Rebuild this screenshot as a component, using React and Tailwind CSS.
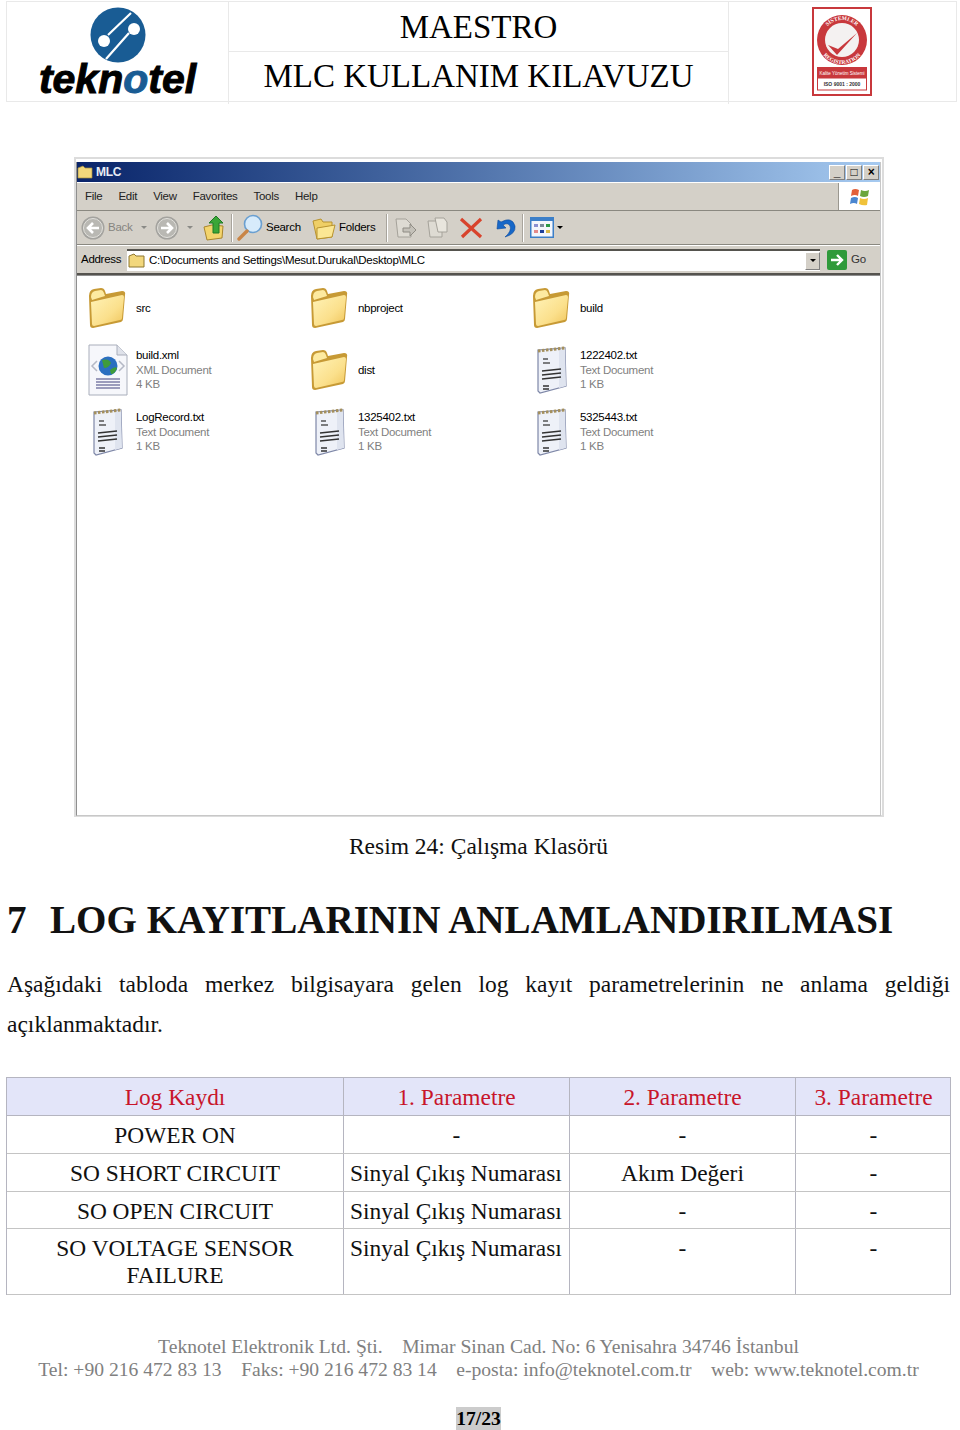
import React from "react";

const SERIF = "font-['Liberation_Serif',serif]";

const Folder = () => (
  <svg width="40" height="42" viewBox="0 0 40 42" className="shrink-0 ml-[-1px]">
    <defs>
      <linearGradient id="fold" x1="0" y1="0" x2="1" y2="1">
        <stop offset="0" stopColor="#fff3b8" />
        <stop offset="0.6" stopColor="#fbe08c" />
        <stop offset="1" stopColor="#efc45a" />
      </linearGradient>
    </defs>
    <path d="M2 9 Q2 3 7 2 L14 1 Q17 1 18 4 L19 7 L35 4 Q39 4 38 8 L36 32 Q36 34 34 35 L6 41 Q3 41 3 38 Z" fill="#c79a35" />
    <path d="M4 15 L35 8 Q37 8 37 10 L35 31 Q35 33 33 33 L7 39 Q5 39 5 37 Z" fill="url(#fold)" />
    <path d="M4 10 Q4 5 8 4 L14 3 Q16 3 17 6 L18 9 L5 13 Z" fill="#fdeaa0" />
  </svg>
);

const Notepad = () => (
  <svg width="32" height="48" viewBox="0 0 32 48" className="shrink-0 ml-[3px]">
    <path d="M3 4 L30 2 L31 40 L5 47 L3 45 Z" fill="#eef1f8" stroke="#7f88a8" strokeWidth="1.2" />
    <path d="M24 3 L30 2 L31 40 L24 42 Z" fill="#dfe4ef" />
    <path d="M3 5 L30 2" stroke="#a48f5c" strokeWidth="3" strokeDasharray="2.5 1.5" />
    <path d="M8 13 H13 M8 17 H15" stroke="#555" strokeWidth="1.5" />
    <path d="M7 25 L26 23 M7 29 L26 27 M7 33 L26 31" stroke="#333" strokeWidth="1.3" />
    <path d="M8 40 H14 M8 43 H14" stroke="#333" strokeWidth="1.3" />
  </svg>
);

const XmlDoc = () => (
  <svg width="40" height="52" viewBox="0 0 40 52" className="shrink-0">
    <path d="M1 1 H29 L39 11 V51 H1 Z" fill="#f6f7fb" stroke="#a9aebb" />
    <path d="M29 1 V11 H39" fill="#dfe2ea" stroke="#a9aebb" />
    <path d="M9 17 L4 22 L9 27 M31 17 L36 22 L31 27" fill="none" stroke="#b5b9c6" strokeWidth="1.5" />
    <circle cx="20" cy="22" r="9.5" fill="#2b6fc0" />
    <path d="M14 16 Q21 14 23 19 Q21 24 16 24 Z M22 26 Q27 22 29 24 Q27 30 23 30 Z" fill="#3f9c3a" />
    <path d="M8 35 H32 M8 38 H32 M8 41 H32 M8 44 H32" stroke="#7d7fa8" strokeWidth="1.3" />
  </svg>
);

const FileItem = ({ icon, name, lines = [] }) => (
  <div className="flex items-center h-[62px]">
    <div className="w-[48px] flex justify-start">{icon}</div>
    <div className="text-[11.5px] leading-[14.5px] text-black">
      <div>{name}</div>
      {lines.map((l) => (
        <div key={l} className="text-[#7f7f7f]">{l}</div>
      ))}
    </div>
  </div>
);

const Circle = ({ flip }) => (
  <svg width="24" height="24" viewBox="0 0 24 24" className="shrink-0">
    <circle cx="12" cy="12" r="11.5" fill="#a3a29e" />
    <circle cx="12" cy="12" r="9.5" fill="#b9b8b3" stroke="#e2e1dc" />
    <path d={flip ? "M6 12 H17 M12 7 L17 12 L12 17" : "M18 12 H7 M12 7 L7 12 L12 17"} stroke="#fff" strokeWidth="2.6" fill="none" />
  </svg>
);

const SmallArrow = ({ className = "", color = "#8a8a86" }) => (
  <span className={`w-0 h-0 border-x-[3px] border-x-transparent border-t-[3px] ${className}`} style={{ borderTopColor: color }} />
);

const Sep = ({ className = "" }) => <span className={`w-[2px] h-[28px] bg-[#a8a49c] border-r border-white ${className}`} />;

const Toolbar = () => (
  <div className="h-[34px] flex items-center pl-[4px] border-b border-[#8a8880] text-[11.5px] whitespace-nowrap">
    <Circle />
    <span className="ml-[3px] w-[24px] text-[#85847f]">Back</span>
    <SmallArrow className="ml-[9px]" />
    <span className="ml-[8px]"><Circle flip /></span>
    <SmallArrow className="ml-[8px]" />
    <svg width="22" height="26" viewBox="0 0 22 26" className="ml-[10px] shrink-0">
      <path d="M1 12 L9 10 L20 11 L19 23 L4 25 Z" fill="#f3d46c" stroke="#a9852c" />
      <path d="M13 1 L20 8 H16 V18 H10 V8 H6 Z" fill="#3aa637" stroke="#1f7a24" />
    </svg>
    <Sep className="ml-[6px]" />
    <svg width="26" height="27" viewBox="0 0 26 27" className="ml-[4px] shrink-0">
      <circle cx="16" cy="10" r="8.5" fill="#d7ebfb" stroke="#6a9fd0" strokeWidth="1.6" />
      <path d="M10 17 L2 25" stroke="#c98546" strokeWidth="3.4" strokeLinecap="round" />
    </svg>
    <span className="ml-[3px] w-[33px]">Search</span>
    <svg width="24" height="24" viewBox="0 0 24 24" className="ml-[13px] shrink-0">
      <path d="M1 5 L9 3 L11 6 L20 6 L20 21 L5 23 Z" fill="#efcf66" stroke="#b8932f" />
      <path d="M5 12 L23 9 L20 21 L5 23 Z" fill="#fbe794" stroke="#b8932f" />
    </svg>
    <span className="ml-[3px] w-[36px]">Folders</span>
    <Sep className="ml-[11px]" />
    <svg width="23" height="23" viewBox="0 0 23 23" className="ml-[6px] shrink-0">
      <path d="M2 3 H12 L17 8 V21 H4 Z" fill="#dedbd3" stroke="#a5a29a" />
      <path d="M9 12 H16 V8 L22 14 L16 20 V16 H9 Z" fill="#c4c1b9" stroke="#8f8c84" />
    </svg>
    <svg width="23" height="23" viewBox="0 0 23 23" className="ml-[9px] shrink-0">
      <path d="M2 5 H12 L16 9 V21 H4 Z" fill="#dedbd3" stroke="#a5a29a" />
      <path d="M9 2 H18 L21 6 V16 H12 Z" fill="#e8e5dd" stroke="#a5a29a" />
    </svg>
    <svg width="24" height="22" viewBox="0 0 24 22" className="ml-[10px] shrink-0">
      <path d="M2 2 L22 20 M22 2 L3 20" stroke="#d8432c" strokeWidth="3.2" />
    </svg>
    <svg width="24" height="24" viewBox="0 0 24 24" className="ml-[9px] shrink-0">
      <path d="M6 4 L5 13 L14 12 L11 9 Q16 6 18 10 Q20 15 13 21 Q24 18 23 10 Q20 0 9 6 Z" fill="#1667c8" stroke="#0d4a9c" strokeWidth="0.6" />
    </svg>
    <Sep className="ml-[6px]" />
    <svg width="24" height="21" viewBox="0 0 24 21" className="ml-[6px] shrink-0">
      <rect x="0.75" y="0.75" width="22.5" height="19.5" fill="#f3f6fc" stroke="#3c7fc8" strokeWidth="1.5" />
      <rect x="1" y="1" width="22" height="3" fill="#3c7fc8" />
      <path d="M4 7 H8 V10 H4 Z" fill="#8a8fd0" />
      <path d="M10 7 H14 V10 H10 Z" fill="#7a8a9a" />
      <path d="M16 7 H20 V10 H16 Z" fill="#2c9a46" />
      <path d="M4 13 H8 V16 H4 Z" fill="#e58a8a" />
      <path d="M10 13 H14 V16 H10 Z" fill="#1d3f9a" />
      <path d="M16 13 H20 V16 H16 Z" fill="#d8b84a" />
    </svg>
    <SmallArrow className="ml-[3px]" color="#000" />
  </div>
);

const ExplorerWindow = () => (
  <div className="mt-[55px] mx-[74px] w-[810px] h-[660px] border-[2px] border-[#dcdcdc] pr-[1px] pt-[3px] bg-white font-['Liberation_Sans',sans-serif] tracking-[-0.28px]">
    <div className="h-[654px] flex flex-col border-l border-l-[#8f8f8f] border-r border-b border-[#c8c8c8] bg-[#d4d0c8]">
      {/* title bar */}
      <div className="h-[20px] flex items-center pr-[1px] bg-gradient-to-r from-[#0a246a] to-[#a6caf0]">
        <svg width="17" height="14" viewBox="0 0 17 14">
          <path d="M1 3 L6 1 L8 3 H15 V13 H1 Z" fill="#f2d77c" stroke="#a88c3a" strokeWidth="0.7" />
        </svg>
        <span className="ml-[2px] text-[12px] font-bold text-[#e8ecf5]">MLC</span>
        <div className="ml-auto flex gap-[1px]">
          {["_", "□", "×"].map((c) => (
            <span key={c} className="w-[16px] h-[15px] flex items-center justify-center bg-[#d4d0c8] border border-[#808080] border-t-white border-l-white text-[12px] leading-none font-bold text-black">
              {c}
            </span>
          ))}
        </div>
      </div>
      {/* menu */}
      <div className="h-[29px] flex border-t border-white border-b border-b-[#8a8880]">
        <div className="flex-1 flex items-center pl-[8px] gap-[16px] text-[11.5px] text-[#222]">
          {["File", "Edit", "View", "Favorites", "Tools", "Help"].map((m) => (
            <span key={m}>{m}</span>
          ))}
        </div>
        <div className="w-[42px] flex items-center justify-center bg-white border-l border-[#9a978f]">
          <svg width="20" height="20" viewBox="0 0 20 20">
            <path d="M2 3 Q5 1 9 3 L8 9 Q5 7 1 9 Z" fill="#e2603a" />
            <path d="M11 3 Q15 5 19 3 L18 9 Q14 11 10 9 Z" fill="#6aa63c" />
            <path d="M1 11 Q5 9 8 11 L7 17 Q4 15 0 17 Z" fill="#4a86d0" />
            <path d="M10 11 Q14 13 18 11 L17 18 Q13 19 9 17 Z" fill="#f0c23a" />
          </svg>
        </div>
      </div>
      <Toolbar />
      {/* address bar */}
      <div className="h-[30px] flex items-center pl-[4px] text-[11.5px] border-t border-white border-b-[2px] border-b-[#55534e] whitespace-nowrap">
        <span className="w-[40px]">Address</span>
        <div className="ml-[6px] w-[693px] h-[22px] flex items-center bg-white border-t-[2px] border-[#55534e] pl-[1px]">
          <svg width="18" height="15" viewBox="0 0 18 15" className="shrink-0">
            <path d="M1 3 L6 1 L8 3 H16 V14 H1 Z" fill="#f2d77c" stroke="#8d7630" />
          </svg>
          <span className="ml-[3px]">C:\Documents and Settings\Mesut.Durukal\Desktop\MLC</span>
          <span className="ml-auto w-[15px] h-[18px] flex items-center justify-center bg-[#d4d0c8] border border-[#808080] border-t-white border-l-white">
            <SmallArrow color="#000" />
          </span>
        </div>
        <svg width="20" height="20" viewBox="0 0 20 20" className="ml-[7px] shrink-0">
          <rect width="20" height="20" rx="2" fill="#2f9a3a" />
          <path d="M4 10 H14 M10 5 L15 10 L10 15" stroke="#fff" strokeWidth="2.4" fill="none" />
        </svg>
        <span className="ml-[4px] text-[#333]">Go</span>
      </div>
      {/* file list */}
      <div className="flex-1 bg-white pt-[1px] pl-[11px] border-t border-[#8f8f8f]">
        <div className="grid grid-cols-[222px_222px_222px]">
          <FileItem icon={<Folder />} name="src" />
          <FileItem icon={<Folder />} name="nbproject" />
          <FileItem icon={<Folder />} name="build" />
          <FileItem icon={<XmlDoc />} name="build.xml" lines={["XML Document", "4 KB"]} />
          <FileItem icon={<Folder />} name="dist" />
          <FileItem icon={<Notepad />} name="1222402.txt" lines={["Text Document", "1 KB"]} />
          <FileItem icon={<Notepad />} name="LogRecord.txt" lines={["Text Document", "1 KB"]} />
          <FileItem icon={<Notepad />} name="1325402.txt" lines={["Text Document", "1 KB"]} />
          <FileItem icon={<Notepad />} name="5325443.txt" lines={["Text Document", "1 KB"]} />
        </div>
      </div>
    </div>
  </div>
);

const Header = () => (
  <div className="ml-[6px] mt-[1px] w-[951px] h-[101px] grid grid-cols-[222px_499px_228px] border border-[#e9e9e9]">
    <div className="flex flex-col items-center pt-[5px] border-r border-[#e9e9e9]">
      <svg width="56" height="56" viewBox="0 0 56 56" className="shrink-0">
        <circle cx="28" cy="28" r="27.5" fill="#195c94" />
        <path d="M41 6 L18 28 M39 26 L16 52" stroke="#fff" strokeWidth="2.2" />
        <circle cx="14" cy="34" r="6" fill="#fff" />
        <circle cx="44" cy="22" r="6" fill="#fff" />
      </svg>
      <div className="-mt-[6px] text-[41px] leading-[44px] font-bold italic text-black font-['Liberation_Sans',sans-serif] [-webkit-text-stroke:1px_black]">
        tekn<span className="text-[#195c94] [-webkit-text-stroke:1px_#195c94]">o</span>tel
      </div>
    </div>
    <div className={`flex flex-col text-[33px] text-black ${SERIF}`}>
      <div className="h-[50px] flex items-center justify-center pt-[2px] border-b border-[#e9e9e9]">MAESTRO</div>
      <div className="flex-1 flex items-center justify-center pb-[2px]">MLC KULLANIM KILAVUZU</div>
    </div>
    <div className="flex items-center justify-center pb-[2px] pr-[2px] border-l border-[#e9e9e9]">
      <svg width="60" height="89" viewBox="0 0 60 89">
        <rect x="1" y="1" width="58" height="87" fill="#fff" stroke="#c8383c" strokeWidth="2" />
        <circle cx="30" cy="33" r="25" fill="#c8383c" />
        <circle cx="30" cy="33" r="17" fill="#f4f1f1" />
        <defs>
          <path id="isoTop" d="M10 33 A20 20 0 0 1 50 33" />
          <path id="isoBot" d="M6 33 A24 24 0 0 0 54 33" />
        </defs>
        <text fontSize="5.5" fill="#fff" fontFamily="Liberation Serif, serif" fontWeight="bold">
          <textPath href="#isoTop" startOffset="50%" textAnchor="middle">SİSTEMLER</textPath>
        </text>
        <text fontSize="5.5" fill="#fff" fontFamily="Liberation Serif, serif" fontWeight="bold">
          <textPath href="#isoBot" startOffset="50%" textAnchor="middle">REGISTRATION</textPath>
        </text>
        <path d="M16 38 L25 48 L45 26 L26 42 Z" fill="#c8383c" />
        <rect x="5" y="60" width="50" height="11" fill="#c8383c" />
        <text x="30" y="67.5" fontSize="4.5" fill="#fff" textAnchor="middle" fontFamily="Liberation Sans, sans-serif">Kalite Yönetim Sistemi</text>
        <rect x="5.5" y="71" width="49" height="12" fill="#fff" stroke="#c8383c" />
        <text x="30" y="79" fontSize="5" fill="#333" fontWeight="bold" textAnchor="middle" fontFamily="Liberation Sans, sans-serif">ISO 9001 : 2000</text>
      </svg>
    </div>
  </div>
);

const cols = "grid grid-cols-[337px_226px_226px_155px]";
const rows = [
  { cells: ["POWER ON", "-", "-", "-"], h: "h-[38px]" },
  { cells: ["SO SHORT CIRCUIT", "Sinyal Çıkış Numarası", "Akım Değeri", "-"], h: "h-[38px]" },
  { cells: ["SO OPEN CIRCUIT", "Sinyal Çıkış Numarası", "-", "-"], h: "h-[37px]" },
  { cells: ["SO VOLTAGE SENSOR FAILURE", "Sinyal Çıkış Numarası", "-", "-"], h: "h-[66px]" },
];

const LogTable = () => (
  <div className="mt-[33px] ml-[6px] w-[945px] border border-b-0 border-[#b5b5c0] text-[23.4px] leading-[27px]">
    <div className={`${cols} h-[38px] bg-[#e3e5f9] text-[#c8152b] border-b border-[#b5b5c0]`}>
      {["Log Kaydı", "1. Parametre", "2. Parametre", "3. Parametre"].map((t, i) => (
        <div key={t} className={`flex items-center justify-center pt-[2px] ${i < 3 ? "border-r border-[#b5b5c0]" : ""}`}>{t}</div>
      ))}
    </div>
    {rows.map((r) => (
      <div key={r.cells[0]} className={`${cols} ${r.h} border-b border-[#c4c4c4] text-[#111]`}>
        {r.cells.map((c, i) => (
          <div
            key={i}
            className={`pt-[6px] ${i < 3 ? "border-r border-[#b5b5c0]" : ""} ${c.startsWith("Sinyal") ? "pl-[6px] whitespace-nowrap" : "text-center"} ${i === 0 ? "px-[40px]" : ""}`}
          >
            {c}
          </div>
        ))}
      </div>
    ))}
  </div>
);

export default function App() {
  return (
    <div className={`relative w-[960px] h-[1430px] overflow-hidden bg-white ${SERIF}`}>
      <Header />
      <ExplorerWindow />
      <div className="mt-[14px] w-[957px] h-[32px] flex items-center justify-center text-[23.5px] text-[#111]">
        Resim 24: Çalışma Klasörü
      </div>
      <h1 className="mt-[32px] ml-[7px] h-[50px] flex items-center text-[39.1px] font-bold text-[#111] whitespace-nowrap">
        <span className="w-[43px]">7</span>
        <span>LOG KAYITLARININ ANLAMLANDIRILMASI</span>
      </h1>
      <p className="mt-[19px] mx-[7px] w-[943px] text-[23.5px] leading-[40px] text-justify text-[#111]">
        Aşağıdaki tabloda merkez bilgisayara gelen log kayıt parametrelerinin ne anlama geldiği açıklanmaktadır.
      </p>
      <LogTable />
      <div className="mt-[40px] w-[957px] text-center text-[19.6px] leading-[23px] text-[#808080]">
        <div className="whitespace-pre">Teknotel Elektronik Ltd. Şti.    Mimar Sinan Cad. No: 6 Yenisahra 34746 İstanbul</div>
        <div className="whitespace-pre">Tel: +90 216 472 83 13    Faks: +90 216 472 83 14    e-posta: info@teknotel.com.tr    web: www.teknotel.com.tr</div>
      </div>
      <div className="mt-[26px] w-[957px] flex justify-center">
        <span className="w-[45px] h-[23px] flex items-center justify-center bg-[#cccccc] text-[19.6px] font-bold text-black">17/23</span>
      </div>
    </div>
  );
}
